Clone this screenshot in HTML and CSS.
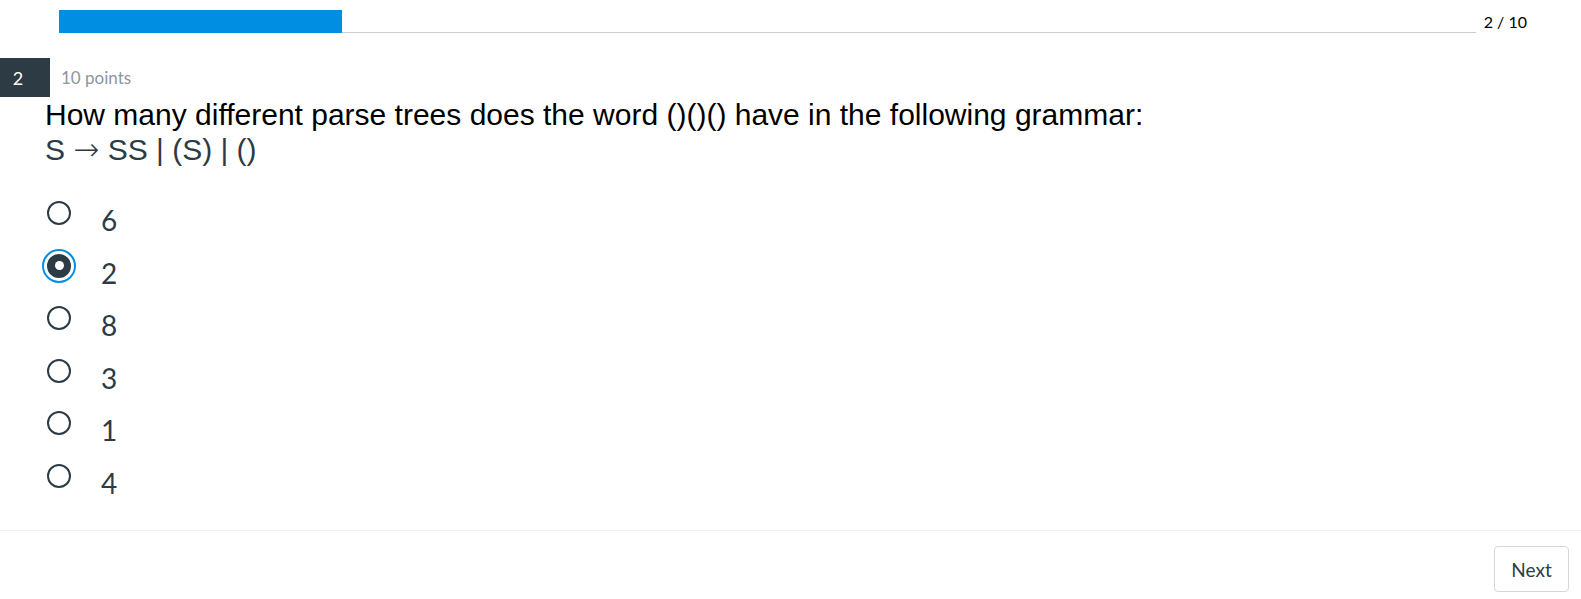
FILE: index.html
```html
<!DOCTYPE html>
<html>
<head>
<meta charset="utf-8">
<link rel="stylesheet" href="styles.css">
</head>
<body>
<div class="page">
  <div class="progress">
    <div class="track"><div class="fill" style="width:20%"></div></div>
    <div class="count">2 / 10</div>
  </div>
  <div class="qheader">
    <div class="qnum">2</div>
    <div class="points">10 points</div>
  </div>
  <div class="qtext">
    <div class="line1">How many different parse trees does the word ()()() have in the following grammar:</div>
    <div class="line2">S <span class="arrow">→</span> SS | (S) | ()</div>
  </div>
  <div class="options">
    <div class="option"><span class="radio"></span><span class="label">6</span></div>
    <div class="option"><span class="radio checked"></span><span class="label">2</span></div>
    <div class="option"><span class="radio"></span><span class="label">8</span></div>
    <div class="option"><span class="radio"></span><span class="label">3</span></div>
    <div class="option"><span class="radio"></span><span class="label">1</span></div>
    <div class="option"><span class="radio"></span><span class="label">4</span></div>
  </div>
  <div class="footer">
    <button class="next">Next</button>
  </div>
</div>
</body>
</html>
```

FILE: styles.css
```css
html, body {
  margin: 0;
  padding: 0;
  background: #ffffff;
}
.page {
  width: 1581px;
  font-family: Lato, "Liberation Sans", sans-serif;
  color: #2d3b45;
}
.progress {
  display: flex;
  align-items: center;
  padding: 10px 54px 0 59px;
}
.track {
  flex: 1;
  height: 23px;
  background: linear-gradient(#c7cdd1, #c7cdd1) left bottom / 100% 1px no-repeat;
}
.fill {
  height: 23px;
  background: #008ee2;
}
.count {
  margin-left: 8px;
  font-family: Lato, sans-serif;
  font-size: 16px;
  color: #000000;
  white-space: nowrap;
}
.qheader {
  display: flex;
  align-items: center;
  margin-top: 25px;
  height: 39px;
}
.qnum {
  width: 50px;
  height: 39px;
  background: #2d3b45;
  color: #ffffff;
  font-size: 18px;
  display: flex;
  align-items: center;
  justify-content: center;
  box-sizing: border-box;
  padding-right: 14px;
}
.points {
  margin-left: 11px;
  font-size: 17px;
  color: #8b969e;
}
.qtext {
  margin-top: 0;
  padding-left: 45px;
  font-family: "Liberation Sans", Arial, sans-serif;
  font-size: 30px;
  line-height: 35px;
}
.line1 {
  color: #000000;
}
.line2 {
  color: #2d3b45;
}
.arrow {
  font-family: "DejaVu Sans", sans-serif;
  font-size: 31px;
  font-weight: 300;
}
.options {
  margin-top: 20px;
}
.option {
  height: 52.5px;
  display: flex;
  align-items: center;
  padding-left: 47px;
}
.radio {
  width: 24px;
  height: 24px;
  box-sizing: border-box;
  border: 2px solid #2d3b45;
  border-radius: 50%;
  background: #ffffff;
  position: relative;
  flex: none;
}
.radio.checked {
  background: #2d3b45;
  box-shadow: 0 0 0 3px #ffffff, 0 0 0 5px #008ee2;
}
.radio.checked::after {
  content: "";
  position: absolute;
  left: 50%;
  top: 50%;
  width: 9px;
  height: 9px;
  margin: -4.5px 0 0 -4.5px;
  border-radius: 50%;
  background: #ffffff;
}
.label {
  margin-left: 30px;
  margin-top: 14px;
  font-size: 28px;
  color: #2d3b45;
}
.footer {
  margin-top: 28px;
  border-top: 1px solid #f0f0f0;
  display: flex;
  justify-content: flex-end;
  padding: 15px 12px 0 0;
}
.next {
  width: 75px;
  height: 46px;
  box-sizing: border-box;
  border: 1px solid #d7d7d7;
  border-radius: 4px;
  background: #ffffff;
  font-family: Lato, sans-serif;
  font-size: 19px;
  color: #2d3b45;
  padding: 0;
  cursor: pointer;
}
```
